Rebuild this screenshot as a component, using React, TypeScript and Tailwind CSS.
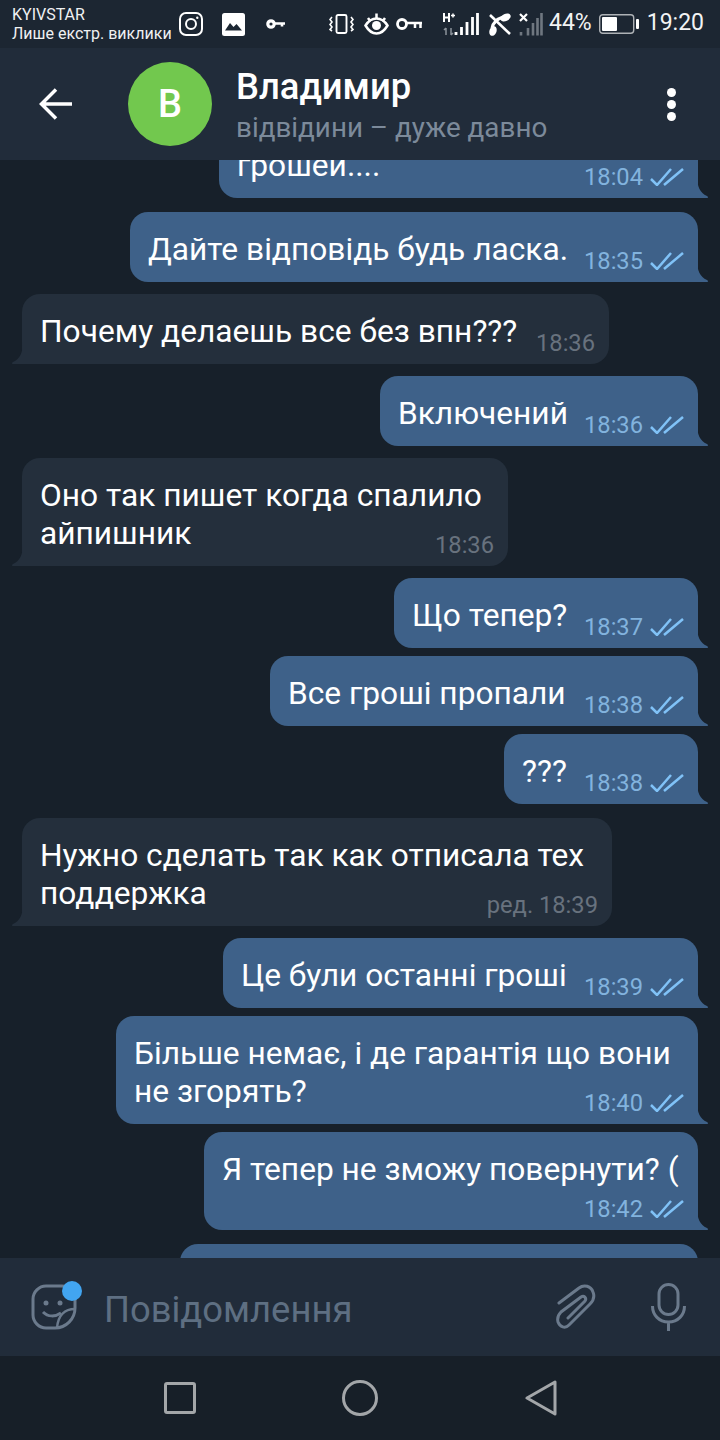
import React from "react";

function Ticks() {
  return (
    <svg width="34" height="18" viewBox="0 0 34 18" fill="none" stroke="#80c2f7" strokeWidth="2.500" className="ml-[7px]">
      <path d="M1 11L7 17L21 1" />
      <path d="M14 17L33 1" />
    </svg>
  );
}

function Tail({ out }: { out: boolean }) {
  return out ? (
    <svg width="12" height="22" viewBox="0 0 12 22" className="absolute right-[-11px] bottom-0" fill="#3e6189">
      <path d="M0 0C0 10 3 17 10 20C11.5 20.8 11.5 22 10 22H0Z" />
    </svg>
  ) : (
    <svg width="12" height="22" viewBox="0 0 12 22" className="absolute left-[-11px] bottom-0" fill="#242f3c">
      <path d="M12 0C12 10 9 17 2 20C0.5 20.8 0.5 22 2 22H12Z" />
    </svg>
  );
}

function Meta({ out, time }: { out: boolean; time: string }) {
  return (
    <div className="flex items-center justify-end h-[28px] shrink-0">
      <span className={out ? "text-[23.7px] leading-[28px] text-[#82b3de]" : "text-[23.7px] leading-[28px] text-[#68727e]"}>{time}</span>
      {out && <Ticks />}
    </div>
  );
}

type Msg = { out: boolean; lines: string[]; time: string; box: string; stack?: boolean };

const msgs: Msg[] = [
  { out: true, lines: ["грошей...."], time: "18:04", box: "w-[479px] mt-[-32px] mb-[14px]" },
  { out: true, lines: ["Дайте відповідь будь ласка."], time: "18:35", box: "w-[568px] mb-[12px]" },
  { out: false, lines: ["Почему делаешь все без впн???"], time: "18:36", box: "w-[587px] mb-[12px]" },
  { out: true, lines: ["Включений"], time: "18:36", box: "w-[318px] mb-[12px]" },
  { out: false, lines: ["Оно так пишет когда спалило", "айпишник"], time: "18:36", box: "w-[486px] mb-[12px]" },
  { out: true, lines: ["Що тепер?"], time: "18:37", box: "w-[304px] mb-[8px]" },
  { out: true, lines: ["Все гроші пропали"], time: "18:38", box: "w-[428px] mb-[8px]" },
  { out: true, lines: ["???"], time: "18:38", box: "w-[194px] mb-[14px]" },
  { out: false, lines: ["Нужно сделать так как отписала тех", "поддержка"], time: "ред. 18:39", box: "w-[590px] mb-[12px]" },
  { out: true, lines: ["Це були останні гроші"], time: "18:39", box: "w-[475px] mb-[8px]" },
  { out: true, lines: ["Більше немає, і де гарантія що вони", "не згорять?"], time: "18:40", box: "w-[582px] mb-[8px]" },
  { out: true, lines: ["Я тепер не зможу повернути? ("], time: "18:42", box: "w-[494px] mb-[14px]", stack: true },
];

function Bubble({ m }: { m: Msg }) {
  const shape = m.out
    ? "self-end mr-[22px] bg-[#3e6189] rounded-[18px] rounded-br-none"
    : "self-start ml-[22px] bg-[#242f3c] rounded-[18px] rounded-bl-none";
  const multi = m.lines.length > 1 || m.stack;
  return (
    <div className={`relative shrink-0 pt-[19px] pb-[7px] pl-[18px] pr-[14px] ${shape} ${m.box}`}>
      {multi ? (
        <div>
          {m.lines.map((l) => (
            <div key={l} className={m.stack ? "text-[31.7px] leading-[37px] text-white whitespace-nowrap" : "text-[31.7px] leading-[38px] text-white whitespace-nowrap"}>{l}</div>
          ))}
          <div className={m.stack ? "mt-[7px]" : "mt-[-22px]"}>
            <Meta out={m.out} time={m.time} />
          </div>
        </div>
      ) : (
        <div className="flex items-end justify-between">
          <div className="text-[31.7px] leading-[37px] pb-[7px] text-white whitespace-nowrap">{m.lines[0]}</div>
          <Meta out={m.out} time={m.time} />
        </div>
      )}
      <Tail out={m.out} />
    </div>
  );
}

function StatusIcons() {
  return (
    <div className="flex items-center ml-[9px] h-[48px]">
      <svg width="24" height="24" viewBox="0 0 24 24" fill="none" stroke="#fff" strokeWidth="2">
        <rect x="1" y="1" width="22" height="22" rx="6" />
        <circle cx="12" cy="12" r="5" />
        <circle cx="18.3" cy="5.7" r="1.2" fill="#fff" stroke="none" />
      </svg>
      <svg width="23" height="23" viewBox="0 0 23 23" className="ml-[19px]">
        <rect x="0" y="0" width="23" height="23" rx="2.5" fill="#fff" />
        <path d="M3 17.5L8 10L11.5 14L14.5 11L20 17.5Z" fill="#1c2733" />
      </svg>
      <svg width="20" height="12" viewBox="0 0 20 12" className="ml-[21px]" fill="none" stroke="#fff">
        <circle cx="5" cy="6" r="3.2" strokeWidth="3.2" />
        <path d="M9 5.5H19M16 5.5V8.5" strokeWidth="2.6" />
      </svg>
      <svg width="25" height="20" viewBox="0 0 25 20" className="ml-[43px]" fill="none" stroke="#fff">
        <rect x="7.5" y="1" width="10" height="18" rx="1.5" strokeWidth="1.9" />
        <path d="M3 3L1 5.5L3 8L1 10.5L3 13L1 15.5L3 17M22 3L24 5.5L22 8L24 10.5L22 13L24 15.5L22 17" strokeWidth="1.6" />
      </svg>
      <svg width="25" height="22" viewBox="0 0 25 22" className="ml-[10px]" fill="none" stroke="#fff">
        <path d="M1.500 12.500C5 7 9 5.500 12.500 5.500C16 5.500 20 7 23.500 12.500C20 18.500 16 20.500 12.500 20.500C9 20.500 5 18.500 1.500 12.500Z" strokeWidth="2.500" />
        <circle cx="12.500" cy="12.500" r="4.500" fill="#fff" stroke="none" />
        <path d="M4 5L6.500 8.500M12.500 0.500V5M21 5L18.500 8.500" strokeWidth="2.500" />
      </svg>
      <svg width="27" height="12" viewBox="0 0 27 12" className="ml-[7px]" fill="none" stroke="#fff">
        <circle cx="6" cy="6" r="4.500" strokeWidth="2.800" />
        <path d="M10 5H26M19 5V10M24.500 5V10" strokeWidth="2.500" />
      </svg>
      <svg width="36" height="24" viewBox="0 0 36 24" className="ml-[20px]" fill="none">
        <path d="M1 1V10M6 1V10M1 5.500H6" stroke="#fff" strokeWidth="2" />
        <path d="M8 3.500H12M10 1.500V5.500" stroke="#fff" strokeWidth="1.500" />
        <path d="M3 23V16M3 16L1 18M8 16V23M8 23L10 21" stroke="#8b929a" strokeWidth="1.500" />
        <path d="M13 20V23M18.500 15V23M24 10V23M29.500 5V23M34.500 1V23" stroke="#fff" strokeWidth="2.800" />
      </svg>
      <svg width="24" height="23" viewBox="0 0 24 23" className="ml-[9px]" fill="none" stroke="#fff">
        <path d="M4 15C5 10 9 6 15 4" strokeWidth="3" />
        <ellipse cx="17.500" cy="4.500" rx="5.500" ry="3.500" transform="rotate(-25 17.500 4.500)" fill="#fff" stroke="none" />
        <ellipse cx="5" cy="18" rx="3.500" ry="5" transform="rotate(20 5 18)" fill="#fff" stroke="none" />
        <path d="M2 2L22 21" strokeWidth="2.600" />
      </svg>
      <svg width="24" height="23" viewBox="0 0 24 23" className="ml-[7px]" fill="none">
        <path d="M1 1L8 8M8 1L1 8" stroke="#fff" strokeWidth="2.200" />
        <path d="M2 19V22.500M9 15V22.500M14 10V22.500M18.500 5V22.500M22.500 0V22.500" stroke="#6f7780" strokeWidth="2.600" />
      </svg>
      <span className="ml-[6px] text-[23px] leading-[28px] text-[#f2f3f4] relative top-[-1px]">44%</span>
      <svg width="40" height="20" viewBox="0 0 40 20" className="ml-[7px]" fill="none">
        <rect x="0.700" y="0.700" width="34" height="18.600" rx="3" stroke="#aeb2b6" strokeWidth="1.400" />
        <rect x="3" y="3" width="15" height="14" rx="1" fill="#fff" />
        <rect x="37" y="5" width="3" height="10" rx="1" fill="#fff" />
      </svg>
      <span className="ml-[8px] text-[23px] leading-[28px] text-[#f2f3f4] relative top-[-1px]">19:20</span>
    </div>
  );
}

export default function App() {
  return (
    <div className="w-[720px] h-[1440px] overflow-hidden flex flex-col bg-[#17202a] font-['Roboto','Noto_Sans',sans-serif]">
      <div className="h-[48px] shrink-0 bg-[#1c2632] flex items-center pl-[12px]">
        <div className="w-[158px] text-[16px] leading-[19px] text-[#f0f1f2] whitespace-nowrap">
          <div>KYIVSTAR</div>
          <div>Лише екстр. виклики</div>
        </div>
        <StatusIcons />
      </div>

      <div className="h-[112px] shrink-0 bg-[#212c3a] flex items-center pl-[39px] relative z-10">
        <svg width="33" height="32" viewBox="0 0 33 32" fill="none" stroke="#fff" strokeWidth="3.500">
          <path d="M33 16H3M17 1.500L2.500 16L17 30.500" />
        </svg>
        <div className="ml-[56px] w-[84px] h-[84px] rounded-full bg-[#72c84e] flex items-center justify-center text-white text-[38px] font-medium">В</div>
        <div className="ml-[24px] pt-[3px] flex flex-col">
          <div className="text-[36.4px] leading-[44px] font-medium text-white">Владимир</div>
          <div className="text-[27.8px] leading-[38px] text-[#7c8a9a]">відвідини – дуже давно</div>
        </div>
        <div className="ml-auto mr-[44px] flex flex-col gap-[3px]">
          <div className="w-[9px] h-[9px] rounded-full bg-white" />
          <div className="w-[9px] h-[9px] rounded-full bg-white" />
          <div className="w-[9px] h-[9px] rounded-full bg-white" />
        </div>
      </div>

      <div className="h-[1098px] shrink-0 overflow-hidden flex flex-col">
        {msgs.map((m, i) => (
          <Bubble key={i} m={m} />
        ))}
        <div className="self-end mr-[22px] w-[518px] h-[60px] shrink-0 bg-[#3e6189] rounded-[18px]" />
      </div>

      <div className="h-[98px] shrink-0 bg-[#212c3a] flex items-center pl-[31px] relative z-10">
        <div className="relative w-[46px] h-[46px]">
          <svg width="46" height="46" viewBox="0 0 46 46" fill="none" stroke="#6b7a8c" strokeWidth="3">
            <path d="M15 2H31C38 2 44 8 44 15V24C44 35 35 44 24 44H15C8 44 2 38 2 31V15C2 8 8 2 15 2Z" />
            <path d="M44 25C34 25 27 31 26 44" strokeWidth="2.500" />
            <path d="M12 28C17 33 24 33 30 29" />
            <circle cx="15" cy="19" r="2.500" fill="#6b7a8c" stroke="none" />
            <circle cx="29" cy="19" r="2.500" fill="#6b7a8c" stroke="none" />
          </svg>
          <div className="absolute w-[20px] h-[20px] rounded-full bg-[#42a5f0] left-[31px] top-[-3px]" />
        </div>
        <div className="ml-[27px] pt-[5px] text-[36.4px] leading-[44px] text-[#5e6f82]">Повідомлення</div>
        <svg width="41" height="46" viewBox="0 0 41 46" fill="none" stroke="#6b7a8c" strokeWidth="3" strokeLinecap="round" className="ml-auto">
          <path d="M3 19L23 4C28 0 35 2 37 8C39 13 37 17 34 20L13 41C9 45 4 43 2 38C1 34 2 31 5 28L25 13C28 11 31 14 29 17L12 34" />
        </svg>
        <svg width="35" height="48" viewBox="0 0 35 48" fill="none" stroke="#6b7a8c" strokeWidth="3" className="ml-[54px] mr-[34px]">
          <rect x="8" y="1.500" width="19" height="30" rx="9.500" />
          <path d="M1.500 23C1.500 32 8 39 17.500 39C27 39 33.500 32 33.500 23M17.500 39V48" />
        </svg>
      </div>

      <div className="flex-1 bg-[#171f28] flex items-center pl-[164px]">
        <div className="w-[32px] h-[32px] border-[3px] border-[#a3a6a9] rounded-[3px]" />
        <div className="ml-[146px] w-[36px] h-[36px] border-[3px] border-[#a3a6a9] rounded-full" />
        <svg width="32" height="36" viewBox="0 0 32 36" fill="none" stroke="#a3a6a9" strokeWidth="3" strokeLinejoin="round" className="ml-[147px]">
          <path d="M2 18L30 2V34Z" />
        </svg>
      </div>
    </div>
  );
}
